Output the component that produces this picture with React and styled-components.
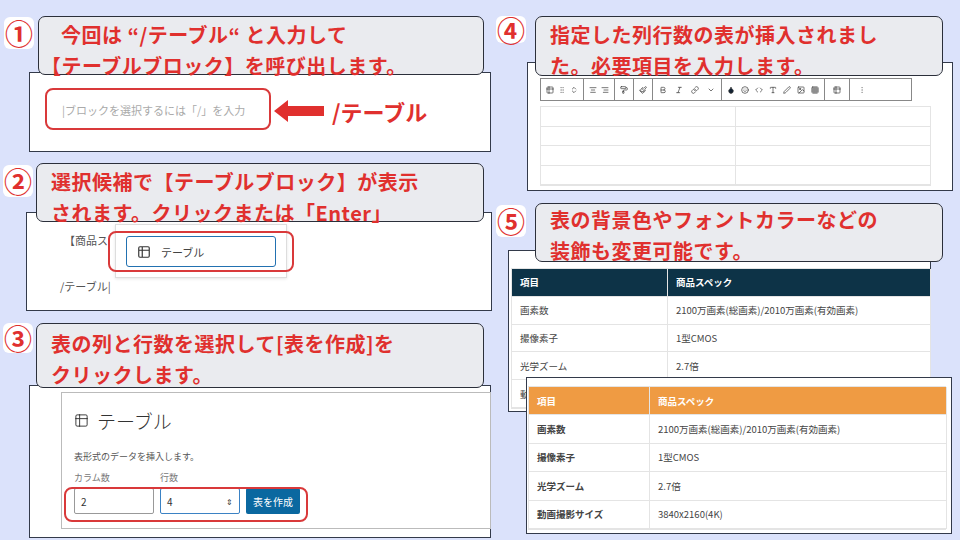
import React from "react";
import styled, { createGlobalStyle } from "styled-components";
import { Table2, GripVertical, ChevronsUpDown, AlignCenter, AlignRight, Paintbrush, Bold, Italic, Link, ChevronDown, Smile, Code, Type, Pen, Image, Grid3x3, MoreVertical, Droplet, PaintRoller } from "lucide-react";

const G = createGlobalStyle`
  html,body{margin:0;padding:0;background:#dbe2fb;}
  body{font-family:"Noto Sans CJK JP","Noto Sans",sans-serif;}
`;
const Canvas = styled.div`position:relative;width:960px;height:540px;overflow:hidden;background:#dbe2fb;`;
const Abs = styled.div`position:absolute;left:${p=>p.x}px;top:${p=>p.y}px;width:${p=>p.w}px;height:${p=>p.h?p.h+"px":"auto"};box-sizing:border-box;`;
const Sheet = styled(Abs)`background:#fff;border:1.5px solid #333a4a;`;
const Callout = styled(Abs)`background:#eaebef;border:1.5px solid #2b2f3a;border-radius:7px;padding:${p=>p.pad||"2px 0 0 22px"};
  color:#e0302e;font-weight:700;font-size:20px;line-height:31px;letter-spacing:0.5px;white-space:nowrap;`;
const Badge = styled(Abs)`background:#fff;border-radius:6px;color:#e0302e;font-weight:700;font-size:28px;line-height:28px;display:flex;align-items:center;justify-content:center;`;
const RedRing = styled(Abs)`border:2.5px solid #d9393a;border-radius:8px;`;
const Small = styled.div`font-size:${p=>p.s||11}px;color:${p=>p.c||"#555"};white-space:nowrap;`;
const Pos = styled(Abs)`display:flex;align-items:center;`;
const Popup = styled(Abs)`background:#fff;border:1px solid #ddd;box-shadow:0 1px 3px rgba(0,0,0,.1);`;
const Item = styled(Abs)`border:1.5px solid #2271b1;border-radius:3px;display:flex;align-items:center;gap:10px;padding-left:10px;font-size:11px;color:#444;`;
const Card = styled(Abs)`border:1px solid #bbb;background:#fff;padding:14px 12px;`;
const Title = styled.div`display:flex;align-items:center;gap:8px;font-size:19px;color:#333;font-weight:300;`;
const Field = styled.div`border:1px solid ${p=>p.focus?"#3b82c4":"#999"};border-radius:2px;width:${p=>p.w}px;height:26px;display:flex;align-items:center;justify-content:space-between;padding:0 6px;box-sizing:border-box;font-size:10px;color:#333;`;
const Btn = styled.div`background:#0a68a0;color:#fff;font-size:10px;width:54px;height:26px;display:flex;align-items:center;justify-content:center;border-radius:2px;`;
const Toolbar = styled(Abs)`display:flex;border:1px solid #888;background:#fff;`;
const TGroup = styled.div`display:flex;align-items:center;gap:${p=>p.g||4}px;padding:0 ${p=>p.px||5}px;border-right:1px solid #888;&:last-child{border-right:none;}`;
const Grid = styled(Abs)`display:grid;grid-template-columns:${p=>p.cols};align-content:start;border:1px solid #e4e4e4;`;
const Cell = styled.div`border-right:1px solid #e4e4e4;border-bottom:1px solid #e4e4e4;height:${p=>p.h}px;box-sizing:border-box;
  display:flex;align-items:center;padding-left:8px;font-size:9.5px;color:${p=>p.hd?"#fff":"#444"};font-weight:${p=>p.hd||p.b?700:400};
  background:${p=>p.hd?p.bg:"#fff"};white-space:nowrap;overflow:hidden;`;

const Spec = ({ x, y, w, cols, rh, bg, boldKey, n }) => {
  const rows = [["項目","商品スペック"],["画素数","2100万画素(総画素)/2010万画素(有効画素)"],["撮像素子","1型CMOS"],["光学ズーム","2.7倍"],["動画撮影サイズ","3840x2160(4K)"]].slice(0,n);
  return <Grid x={x} y={y} w={w} cols={cols}>{rows.map((r,i)=>r.map((t,j)=><Cell key={i+"-"+j} h={rh} hd={i===0} bg={bg} b={boldKey&&j===0}>{t}</Cell>))}</Grid>;
};

const ic = { size: 8, color: "#333", strokeWidth: 2 };

export default function App(){
  return <Canvas><G/>
    <Sheet x={29} y={72} w={462} h={80}/>
    <RedRing x={45} y={88} w={226} h={42}/>
    <Pos x={62} y={100} h={20}><Small c="#aaa" s={11}>|ブロックを選択するには「/」を入力</Small></Pos>
    <Abs x={272} y={98} w={54} h={26}><svg width="54" height="26"><polygon points="2,13 16,2 16,8 52,8 52,18 16,18 16,24" fill="#e0302e"/></svg></Abs>
    <Pos x={332} y={94} h={34}><Small c="#e0302e" s={22} style={{fontWeight:700}}>/テーブル</Small></Pos>

    <Sheet x={26} y={212} w={466} h={99}/>
    <Pos x={64} y={231} h={18}><Small s={11}>【商品ス</Small></Pos>
    <Popup x={115} y={224} w={172} h={54}/>
    <RedRing x={108} y={231} w={186} h={41}/>
    <Item x={126} y={236} w={150} h={31}><Table2 size={14} color="#333"/>テーブル</Item>
    <Pos x={60} y={277} h={18}><Small s={11}>/テーブル|</Small></Pos>

    <Sheet x={29} y={385} w={462} h={153}/>
    <Card x={61} y={392} w={430} h={137}>
      <Title><Table2 size={15} strokeWidth={1.5}/>テーブル</Title>
      <Small s={9} style={{marginTop:16}}>表形式のデータを挿入します。</Small>
      <div style={{display:"flex",gap:6,marginTop:8}}>
        <div><Small s={9} c="#777">カラム数</Small><Field w={80} style={{marginTop:4}}>2</Field></div>
        <div><Small s={9} c="#777">行数</Small><Field w={80} focus style={{marginTop:4}}>4<span style={{fontSize:8}}>⇕</span></Field></div>
        <div style={{paddingTop:17}}><Btn>表を作成</Btn></div>
      </div>
    </Card>
    <RedRing x={64} y={487} w={244} h={35}/>

    <Sheet x={527} y={62} w={426} h={129}/>
    <Toolbar x={540} y={78} w={372} h={23}>
      <TGroup><Table2 {...ic}/><GripVertical {...ic} color="#999"/><ChevronsUpDown {...ic}/></TGroup>
      <TGroup><AlignCenter {...ic}/><AlignRight {...ic}/></TGroup>
      <TGroup><PaintRoller {...ic}/></TGroup>
      <TGroup><Paintbrush {...ic}/></TGroup>
      <TGroup g={8} px={6}><Bold {...ic}/><Italic {...ic}/><Link {...ic}/><ChevronDown {...ic}/></TGroup>
      <TGroup g={6}><Droplet {...ic} fill="#123"/><Smile {...ic}/><Code {...ic}/><Type {...ic}/><Pen {...ic}/><Image {...ic}/><Grid3x3 {...ic}/></TGroup>
      <TGroup px={8}><Table2 {...ic}/></TGroup>
      <TGroup px={8}><MoreVertical {...ic} color="#999"/></TGroup>
    </Toolbar>
    <Grid x={540} y={106} w={391} cols="195px 195px">{Array.from({length:8}).map((_,i)=><Cell key={i} h={19.5}/>)}</Grid>

    <Sheet x={508} y={250} w={423} h={162}/>
    <Spec x={511} y={268} w={419} cols="156px 263px" rh={27.8} bg="#0d3347" n={5}/>
    <Sheet x={526} y={377} w={426} h={157}/>
    <Spec x={528} y={386} w={418} cols="121px 297px" rh={28.4} bg="#ef9b43" n={5} boldKey/>

    <Callout x={38} y={16} w={446} h={59}>今回は “/テーブル“ と入力して<br/><span style={{marginLeft:-20}}>【テーブルブロック】を呼び出します。</span></Callout>
    <Callout x={36} y={163} w={448} h={59} pad="2px 0 0 14px">選択候補で【テーブルブロック】が表示<br/>されます。クリックまたは「Enter」</Callout>
    <Callout x={36} y={323} w={448} h={65} pad="4px 0 0 14px">表の列と行数を選択して[表を作成]を<br/>クリックします。</Callout>
    <Callout x={535} y={16} w={408} h={60} pad="2px 0 0 14px">指定した列行数の表が挿入されまし<br/>た。必要項目を入力します。</Callout>
    <Callout x={535} y={203} w={408} h={59} pad="0 0 0 14px">表の背景色やフォントカラーなどの<br/>装飾も変更可能です。</Callout>

    <Badge x={4} y={17} w={30} h={32}>①</Badge>
    <Badge x={3} y={165} w={30} h={32}>②</Badge>
    <Badge x={3} y={323} w={30} h={30}>③</Badge>
    <Badge x={496} y={16} w={30} h={27}>④</Badge>
    <Badge x={496} y={205} w={30} h={32}>⑤</Badge>
  </Canvas>;
}
